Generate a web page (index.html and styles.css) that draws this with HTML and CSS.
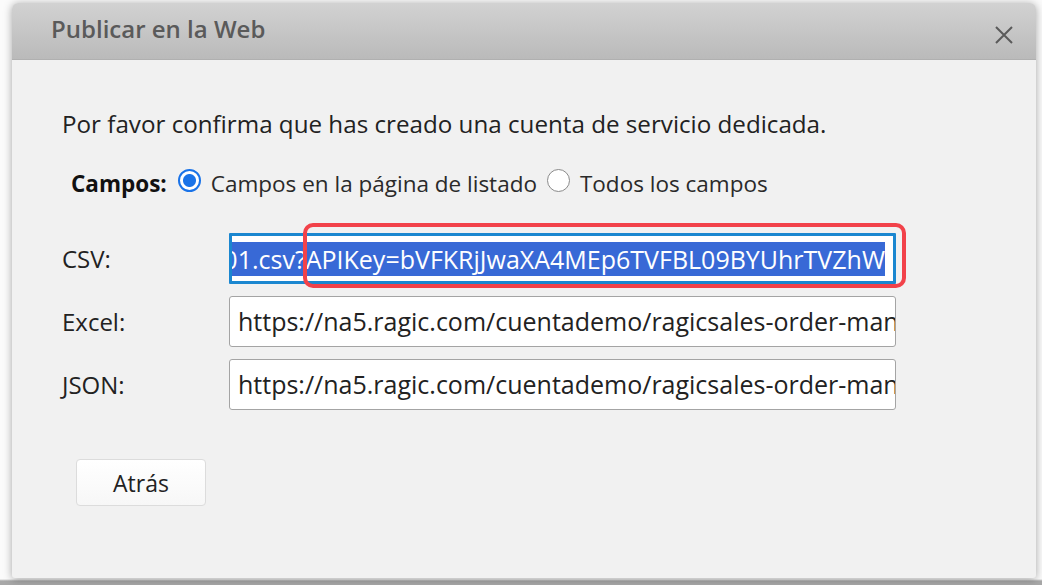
FILE: index.html
```html
<!DOCTYPE html>
<html lang="es">
<head>
  <meta charset="UTF-8" />
  <meta name="viewport" content="width=device-width, initial-scale=1.0"/>
  <title>Publicar en la Web</title>
  <link rel="stylesheet" href="styles.css">
</head>
<body>
  <div class="dialog">
    <div class="dialog-head">
      <span class="dialog-title">Publicar en la Web</span>
      <span class="dialog-close">
        <svg width="20" height="20" viewBox="0 0 20 20"><path d="M2 2 L18 18 M18 2 L2 18" stroke="#5a5a5a" stroke-width="2" fill="none"/></svg>
      </span>
    </div>

    <div class="dialog-body">
      <p class="intro">Por favor confirma que has creado una cuenta de servicio dedicada.</p>

      <div class="fields">
        <b>Campos:</b>
        <label class="opt"><span class="radio checked"></span>Campos en la página de listado</label>
        <label class="opt"><span class="radio"></span>Todos los campos</label>
      </div>

      <div class="link-row">
        <span class="link-label">CSV:</span>
        <div class="link-box focused">
          <span class="sel">https://na5.ragic.com/cuentademo/ragicsales-order-management/20001.csv?APIKey=bVFKRjJwaXA4MEp6TVFBL09BYUhrTVZhW</span>
        </div>
        <!-- marca alrededor de la API key -->
        <div class="mark"></div>
      </div>

      <div class="link-row">
        <span class="link-label">Excel:</span>
        <div class="link-box">https://na5.ragic.com/cuentademo/ragicsales-order-management/20001.xlsx</div>
      </div>

      <div class="link-row">
        <span class="link-label">JSON:</span>
        <div class="link-box">https://na5.ragic.com/cuentademo/ragicsales-order-management/20001.json</div>
      </div>

      <button class="btn">Atrás</button>
    </div>
  </div>
</body>
</html>
```

FILE: styles.css
```css
body {
  margin: 0;
  height: 585px;
  overflow: hidden;
  font-family: "Open Sans", "Noto Sans", sans-serif;
  background: linear-gradient(to bottom, #fbfbfb 0, #fbfbfb 579px, #a8a8a8 581px);
}
.dialog {
  margin: 3px 0 0 12px;
  width: 1024px;
  height: 575px;
  background: #f1f1f1;
  border-radius: 6px 6px 3px 3px;
  box-shadow: 0 1px 8px rgba(0,0,0,0.35);
  overflow: hidden;
}
.dialog-head {
  height: 57px;
  display: flex;
  align-items: center;
  justify-content: space-between;
  padding: 0 22px 0 39px;
  background: linear-gradient(to bottom, #d2d2d2, #bababa);
  border-bottom: 1px solid #b0b0b0;
  box-sizing: border-box;
}
.dialog-title {
  font-size: 24px;
  font-weight: 600;
  color: #5a5a5a;
  margin-top: -5px;
}
.dialog-close {
  display: flex;
  margin-top: 8px;
}
.dialog-body {
  padding: 49px 0 0 50px;
}
.intro {
  margin: 0;
  font-size: 24.2px;
  line-height: 30px;
  color: #222;
}
.fields {
  display: flex;
  align-items: center;
  margin: 29px 0 0 9px;
  height: 30px;
  font-size: 22.5px;
  color: #2a2a2a;
}
.fields b {
  font-weight: 700;
  color: #111;
  margin-right: 11px;
}
.opt {
  display: flex;
  align-items: center;
  margin-right: 10px;
}
.radio {
  width: 23px;
  height: 23px;
  border: 1.5px solid #8a8a8a;
  border-radius: 50%;
  background: #fff;
  margin: -6px 10px 0 0;
  box-sizing: border-box;
}
.radio.checked {
  border: 2px solid #1a73e8;
  background: radial-gradient(circle, #1a73e8 0, #1a73e8 6px, #fff 7px);
}
.fields + .link-row { margin-top: 35px; }
.link-row {
  position: relative;
  display: flex;
  align-items: center;
  margin-top: 12px;
}
.link-label {
  width: 167px;
  font-size: 24px;
  color: #222;
}
.link-box {
  width: 667px;
  height: 51px;
  box-sizing: border-box;
  border: 1px solid #a4a4a4;
  border-radius: 3px;
  background: #fff;
  padding: 0 8px;
  font-size: 25px;
  line-height: 49px;
  color: #222;
  white-space: nowrap;
  overflow: hidden;
}
.link-box.focused {
  display: flex;
  justify-content: flex-end;
  align-items: center;
  border: 3px solid #1b87d0;
  border-radius: 1px;
  padding: 0 8px 0 4px;
}
.sel {
  background: #3869d6;
  color: #fff;
  line-height: 34px;
  flex-shrink: 0;
}
.mark {
  position: absolute;
  left: 241px;
  top: -10px;
  width: 603px;
  height: 65px;
  box-sizing: border-box;
  border: 4px solid #f2424a;
  border-radius: 10px;
}
.btn {
  margin: 49px 0 0 14px;
  width: 130px;
  height: 47px;
  font-family: inherit;
  font-size: 23px;
  color: #222;
  background: linear-gradient(to bottom, #ffffff, #f7f7f7);
  border: 1px solid #dcdcdc;
  border-radius: 4px;
}
```
